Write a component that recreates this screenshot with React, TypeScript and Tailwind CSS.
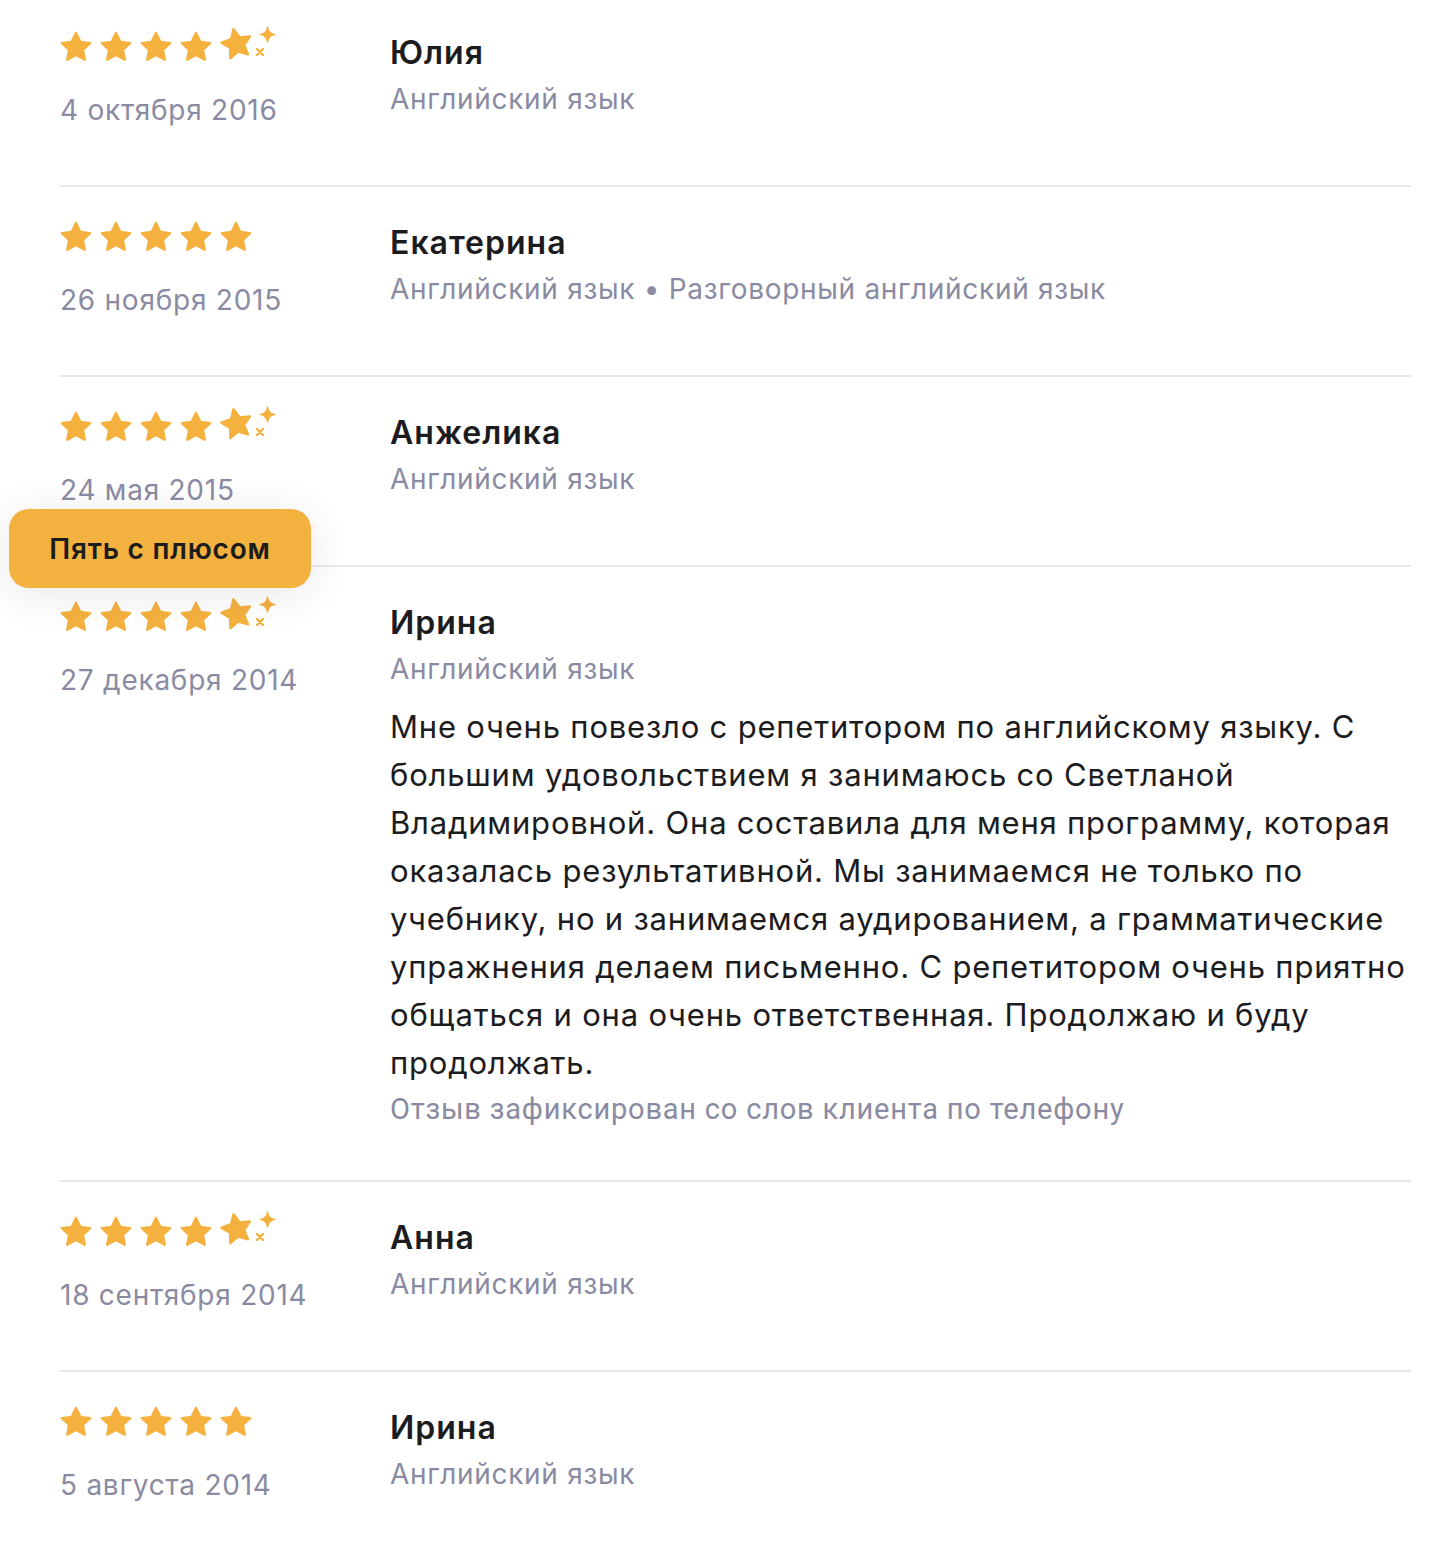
import React from "react";

const STAR = "M12 2.6l2.85 5.95 6.55.85-4.8 4.55 1.25 6.5L12 17.3l-5.85 3.15 1.25-6.5-4.8-4.55 6.55-.85z";
const C = "#F4B13E";

function Star({ className = "" }: { className?: string }) {
  return (
    <svg viewBox="0 0 24 24" className={className} width="36" height="36">
      <path d={STAR} fill={C} stroke={C} strokeWidth="1.6" strokeLinejoin="round" />
    </svg>
  );
}

function Stars({ plus }: { plus: boolean }) {
  return (
    <div className="flex h-[34px] items-center -ml-[2px] -mt-[3px] gap-[4px]">
      <Star />
      <Star />
      <Star />
      <Star />
      {plus ? (
        <div className="relative w-[36px] h-[36px]">
          <svg viewBox="0 0 24 24" width="37" height="37" className="-mt-[4px] -rotate-[12deg]">
            <path d={STAR} fill={C} stroke={C} strokeWidth="1.6" strokeLinejoin="round" />
          </svg>
          <svg viewBox="0 0 16 16" width="17" height="17" className="absolute left-[41px] top-[-3px]">
            <path d="M8 0.8 C8.6 5 11 7.4 15.2 8 C11 8.6 8.6 11 8 15.2 C7.4 11 5 8.6 0.8 8 C5 7.4 7.4 5 8 0.8z" fill={C} stroke={C} strokeWidth="1" strokeLinejoin="round" />
          </svg>
          <svg viewBox="0 0 10 10" width="10" height="10" className="absolute left-[37px] top-[18px]">
            <path d="M2 2L8 8M8 2L2 8" stroke={C} strokeWidth="2.4" strokeLinecap="round" />
          </svg>
        </div>
      ) : (
        <Star />
      )}
    </div>
  );
}

type Review = {
  plus: boolean;
  date: string;
  name: string;
  subjects: string;
  body?: string[];
  note?: string;
};

const reviews: Review[] = [
  { plus: true, date: "4 октября 2016", name: "Юлия", subjects: "Английский язык" },
  { plus: false, date: "26 ноября 2015", name: "Екатерина", subjects: "Английский язык • Разговорный английский язык" },
  { plus: true, date: "24 мая 2015", name: "Анжелика", subjects: "Английский язык" },
  {
    plus: true,
    date: "27 декабря 2014",
    name: "Ирина",
    subjects: "Английский язык",
    body: [
      "Мне очень повезло с репетитором по английскому языку. С",
      "большим удовольствием я занимаюсь со Светланой",
      "Владимировной. Она составила для меня программу, которая",
      "оказалась результативной. Мы занимаемся не только по",
      "учебнику, но и занимаемся аудированием, а грамматические",
      "упражнения делаем письменно. С репетитором очень приятно",
      "общаться и она очень ответственная. Продолжаю и буду",
      "продолжать.",
    ],
    note: "Отзыв зафиксирован со слов клиента по телефону",
  },
  { plus: true, date: "18 сентября 2014", name: "Анна", subjects: "Английский язык" },
  { plus: false, date: "5 августа 2014", name: "Ирина", subjects: "Английский язык" },
];

export default function App() {
  return (
    <div
      className="relative min-h-[1550px] bg-white antialiased"
      style={{ fontFamily: "Inter, 'Noto Sans', sans-serif" }}
    >
      <div className="ml-[59px] w-[1352px]">
        {reviews.map((r, i) => (
          <div
            key={i}
            className={
              "flex " +
              (i === 0 ? "pt-[33px] " : "pt-[36px] border-t-2 border-[#E9E8F1] ") +
              (r.body ? "pb-[51px]" : "pb-[55px]")
            }
          >
            <div className={"w-[331px] shrink-0 pl-[1px] " + (r.body ? "pb-[4px]" : "")}>
              <Stars plus={r.plus} />
              <div className="mt-[26px] text-[28px] leading-[40px] text-[#8A8BA2] tracking-[0.75px]">{r.date}</div>
            </div>
            <div className="flex-1 min-w-0">
              <div className="text-[32px] leading-[40px] font-semibold text-[#1C1C1E] tracking-[1px]">{r.name}</div>
              <div className="mt-[6px] text-[28px] leading-[40px] text-[#8A8BA2] tracking-[0.7px] whitespace-nowrap">{r.subjects}</div>
              {r.body && (
                <div className="mt-[14px] text-[31px] leading-[48px] text-[#1C1C1E] tracking-[0.8px] whitespace-nowrap">
                  {r.body.map((l, j) => (
                    <div key={j}>{l}</div>
                  ))}
                </div>
              )}
              {r.note && (
                <div
                  className="mt-[2px] text-[29px] leading-[40px] text-[#8A8BA2] tracking-[0.8px] whitespace-nowrap"
                  style={{ fontFamily: "Roboto, sans-serif" }}
                >
                  {r.note}
                </div>
              )}
            </div>
          </div>
        ))}
      </div>
      <div className="absolute left-[9px] top-[509px] w-[302px] h-[79px] rounded-[20px] bg-[#F3B13F] shadow-[0_6px_40px_rgba(30,30,60,0.10)] flex items-center justify-center">
        <span className="text-[28px] font-semibold text-[#1C1C1C] tracking-[0.8px]">Пять с плюсом</span>
      </div>
    </div>
  );
}
